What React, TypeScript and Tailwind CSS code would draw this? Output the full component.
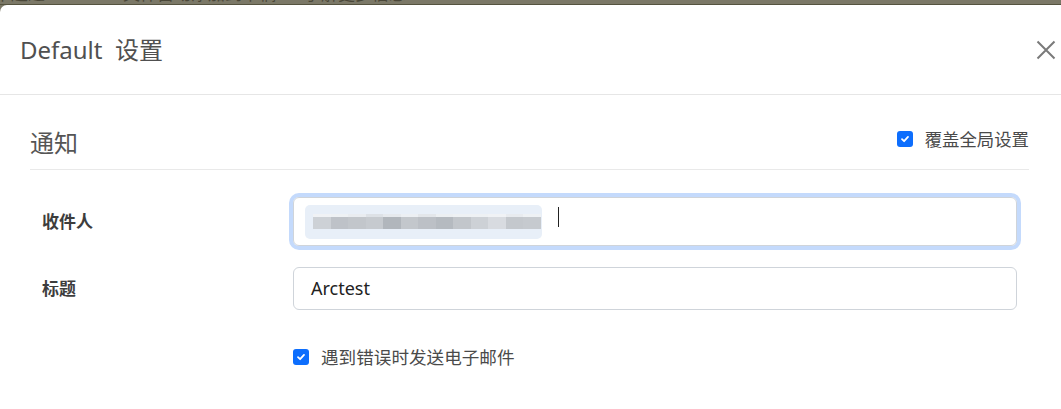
import React from "react";

const FONT = '"Noto Sans", "Noto Sans CJK SC", sans-serif';

function Check() {
  return (
    <div className="flex h-[16px] w-[16px] shrink-0 items-center justify-center rounded-[3px] bg-[#0d6efd]">
      <svg width="10" height="10" viewBox="0 0 10 10" fill="none">
        <path d="M2 5.2 L4.1 7.2 L8 2.9" stroke="white" strokeWidth="1.8" strokeLinecap="round" strokeLinejoin="round" />
      </svg>
    </div>
  );
}

const blurTop = ["#f0f2f5", "#eef1f4", "#e9ecf0", "#dde1e6", "#e6e9ed", "#eceff3", "#e3e6ea", "#eceff2", "#eef1f4", "#eef1f4", "#f0f2f5", "#e8ebef", "#eef1f4"];
const blurMain = ["#cdd1d6", "#bec2c8", "#c2c6cb", "#c6cacf", "#b1b6bc", "#c3c7cc", "#bcc0c6", "#b5bac0", "#c2c6cb", "#cdd1d6", "#d8dbe0", "#c4c8cd", "#c6cacf"];

export default function App() {
  return (
    <div
      className="flex h-[409px] w-[1061px] flex-col overflow-hidden bg-[#7b7867]"
      style={{ fontFamily: FONT }}
    >
      {/* backdrop strip */}
      <div className="h-[5px] shrink-0 overflow-hidden border-b border-[#55533f]">
        <div className="-mt-[16px] flex whitespace-nowrap text-[17px] leading-[20px] text-[#4a4738]">
          <span className="-ml-[6px]">率超过 90%</span>
          <span className="ml-[40px]">文件自动添加到草稿</span>
          <span className="ml-[28px]">了解更多信息</span>
        </div>
      </div>

      {/* modal */}
      <div className="flex-1 rounded-tl-[7px] bg-white">
        <div className="flex h-[90px] items-center justify-between border-b border-[#e6e6e6] pl-[20px] pr-[5px]">
          <div className="text-[24px] leading-[32px] text-[#505050]">Default&nbsp; 设置</div>
          <svg width="20" height="20" viewBox="0 0 20 20">
            <path d="M1.5 1.5 L18.5 18.5 M18.5 1.5 L1.5 18.5" stroke="#7a7a7a" strokeWidth="2" />
          </svg>
        </div>

        <div className="pl-[30px] pr-[32px]">
          <div className="flex items-start justify-between pt-[32px] pb-[10px]">
            <div className="text-[24px] leading-[32px] text-[#555]">通知</div>
            <div className="flex items-center gap-[12px]">
              <Check />
              <span className="text-[17.4px] leading-[24px] text-[#4a4a4a]">覆盖全局设置</span>
            </div>
          </div>
          <div className="h-px bg-[#e9e9e9]" />

          <div className="px-[12px]">
            {/* row 1 */}
            <div className="mt-[27px] flex items-center">
              <div className="w-[251px] text-[17px] font-bold leading-[24px] text-[#3d3d3d]">收件人</div>
              <div className="flex h-[49px] flex-1 items-center rounded-[6px] border border-[#cfd4da] pl-[11px] shadow-[0_0_0_4px_#c4dafc]">
                <div className="flex h-[34px] w-[237px] flex-col justify-center rounded-[5px] bg-[#e8eff8] pl-[8px]">
                  <div className="flex">
                    {blurTop.map((c, i) => (
                      <div key={i} className="h-[3px] w-[17.5px]" style={{ background: c }} />
                    ))}
                  </div>
                  <div className="flex">
                    {blurMain.map((c, i) => (
                      <div key={i} className="h-[12px] w-[17.5px]" style={{ background: c }} />
                    ))}
                  </div>
                </div>
                <div className="mb-[9px] ml-[16px] h-[20px] w-px bg-[#222]" />
              </div>
            </div>

            {/* row 2 */}
            <div className="mt-[21px] flex items-center">
              <div className="w-[251px] text-[17px] font-bold leading-[24px] text-[#3d3d3d]">标题</div>
              <div className="flex h-[43px] flex-1 items-center rounded-[6px] border border-[#cfd4da] pl-[17px] text-[18px] text-[#222]">
                Arctest
              </div>
            </div>

            {/* checkbox row */}
            <div className="mt-[35px] flex items-center gap-[12px] pl-[251px]">
              <Check />
              <span className="text-[17.6px] leading-[24px] text-[#4a4a4a]">遇到错误时发送电子邮件</span>
            </div>
          </div>
        </div>
      </div>
    </div>
  );
}
